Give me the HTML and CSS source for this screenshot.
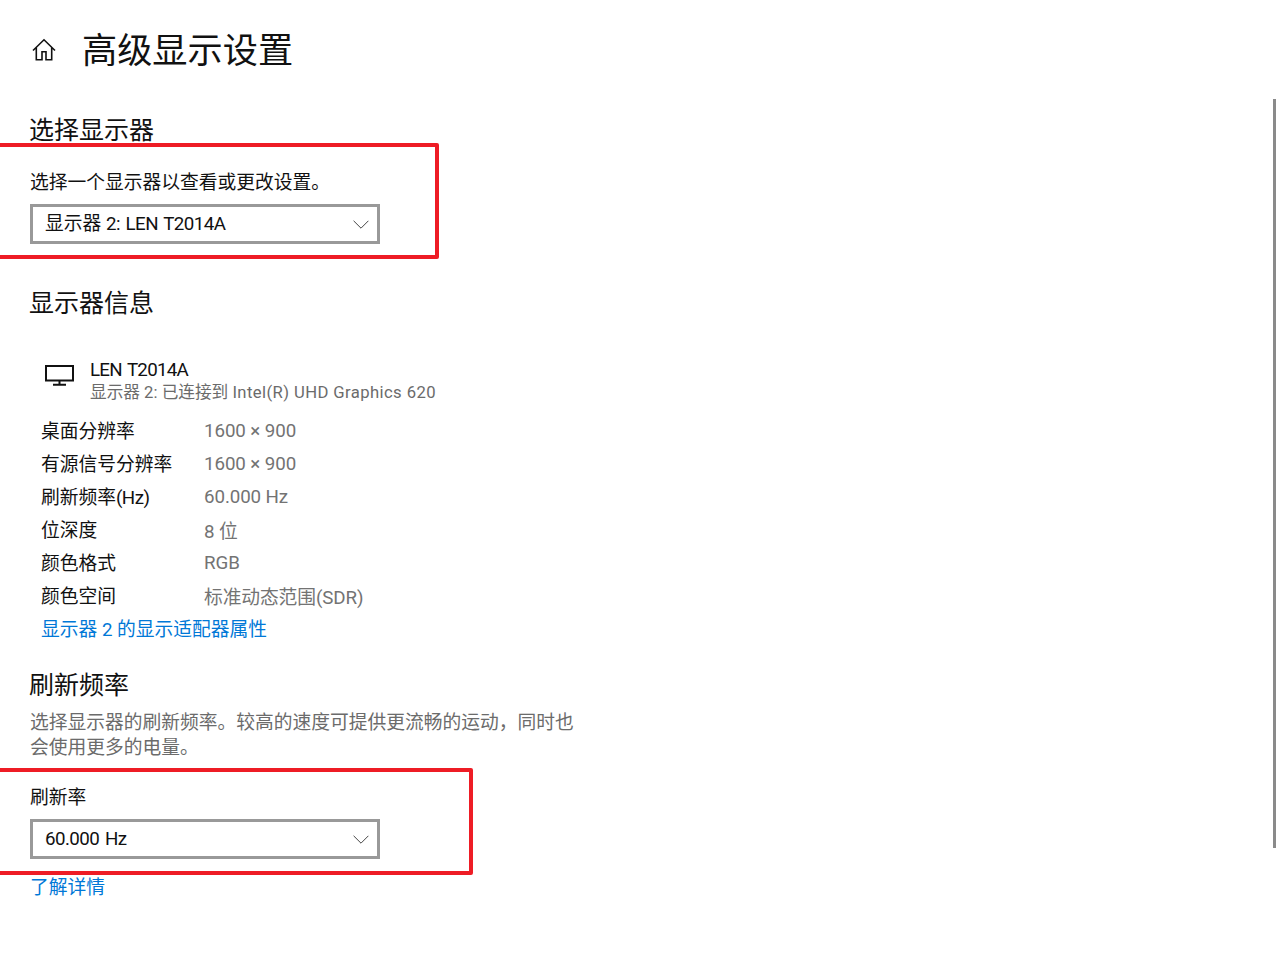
FILE: index.html
```html
<!DOCTYPE html>
<html lang="zh-CN">
<head>
<meta charset="utf-8">
<title>高级显示设置</title>
<link rel="stylesheet" href="styles.css">
</head>
<body>
<main class="page">
  <header class="title-row">
    <svg class="home-icon" viewBox="0 0 24 24" width="24" height="24" aria-hidden="true">
      <path d="M1 12.500 12 1.800l11 10.700M4.300 9.500v12.200h5.700v-7.900h4v7.900h5.700V9.500" fill="none" stroke="#111" stroke-width="1.600"/>
    </svg>
    <h1 class="title">高级显示设置</h1>
  </header>

  <h2 class="heading heading-first">选择显示器</h2>
  <p class="label label-first">选择一个显示器以查看或更改设置。</p>
  <div class="select">
    <span>显示器 <span class="tight">2: LEN T2014A</span></span>
    <svg class="chevron" viewBox="0 0 16 9" width="16" height="9" aria-hidden="true"><path d="M.6.8 8 8.2 15.4.8" fill="none" stroke="#444" stroke-width="1"/></svg>
  </div>

  <h2 class="heading heading-info">显示器信息</h2>
  <div class="monitor">
    <svg class="monitor-icon" viewBox="0 0 30 22" width="30" height="22" aria-hidden="true">
      <path d="M1 1h27v14.500H1zM14.500 15.500v4M8 19.800h13" fill="none" stroke="#111" stroke-width="2"/>
    </svg>
    <div class="monitor-text">
      <div class="monitor-name">LEN T2014A</div>
      <div class="monitor-sub">显示器 2: 已连接到 <span class="wide">Intel(R) UHD Graphics 620</span></div>
    </div>
  </div>

  <dl class="props">
    <div class="prop"><dt>桌面分辨率</dt><dd>1600 × 900</dd></div>
    <div class="prop"><dt>有源信号分辨率</dt><dd>1600 × 900</dd></div>
    <div class="prop"><dt>刷新频率<span class="tight">(Hz)</span></dt><dd>60.000 Hz</dd></div>
    <div class="prop"><dt>位深度</dt><dd>8 位</dd></div>
    <div class="prop"><dt>颜色格式</dt><dd>RGB</dd></div>
    <div class="prop"><dt>颜色空间</dt><dd>标准动态范围(SDR)</dd></div>
    <div class="prop"><a class="link" href="#">显示器 2 的显示适配器属性</a></div>
  </dl>

  <h2 class="heading heading-rate">刷新频率</h2>
  <p class="desc">选择显示器的刷新频率。较高的速度可提供更流畅的运动，同时也<br>会使用更多的电量。</p>
  <p class="label label-rate">刷新率</p>
  <div class="select">
    <span class="tight">60.000 Hz</span>
    <svg class="chevron" viewBox="0 0 16 9" width="16" height="9" aria-hidden="true"><path d="M.6.8 8 8.2 15.4.8" fill="none" stroke="#444" stroke-width="1"/></svg>
  </div>
  <a class="link link-more" href="#">了解详情</a>

  <div class="mark mark-one"></div>
  <div class="mark mark-two"></div>
  <div class="scroll-thumb"></div>
</main>
</body>
</html>
```
FILE: styles.css
```css
* { box-sizing: border-box; }
html, body { margin: 0; padding: 0; background: #fff; }
body {
  font-family: Roboto, "Noto Sans CJK SC", sans-serif;
  font-weight: 400;
  color: #111;
  font-size: 18.75px;
  overflow: hidden;
}
.page {
  position: relative;
  height: 959px;
  padding: 24px 0 0 30px;
}
.title-row { display: flex; align-items: center; height: 48px; }
.home-icon { width: 24px; height: 24px; margin: 3px 26px 0 2px; }
.title { margin: 0; font-size: 35.2px; line-height: 48px; font-weight: 400; font-family: "Noto Sans CJK SC", sans-serif; }
.heading { margin: 0 0 0 -1px; font-size: 25px; line-height: 34px; font-weight: 400; font-family: "Noto Sans CJK SC", sans-serif; }
.heading-first { margin-top: 39px; }
.heading-info { margin-top: 40px; }
.heading-rate { margin-top: 22px; }
.label { margin: 0; line-height: 26px; }
.label-first { margin-top: 25px; }
.label-rate { margin-top: 24px; }
.select {
  display: flex;
  align-items: center;
  justify-content: space-between;
  width: 350px;
  height: 40px;
  margin-top: 8px;
  padding: 0 8px 0 12px;
  border: 3px solid #999;
  background: #fff;
  line-height: 30px;
}
.tight { letter-spacing: -0.55px; word-spacing: 1.5px; }
.wide { letter-spacing: 0.4px; }
.chevron { flex: none; }
.monitor { display: flex; margin: 39px 0 0 15px; }
.monitor-icon { margin-top: 8px; }
.monitor-text { margin-left: 15px; padding-top: 2px; }
.monitor-name { line-height: 23px; letter-spacing: -0.75px; word-spacing: 1.5px; }
.monitor-sub { line-height: 22px; font-size: 16.67px; color: #6b6b6b; }
.props { margin: 9px 0 0 11px; }
.prop { display: flex; height: 33px; align-items: center; }
.prop dt { width: 163px; }
.prop dd { margin: 0; padding-top: 2px; color: #737373; letter-spacing: -0.1px; }
.link { color: #0078d7; text-decoration: none; }
.link-more { display: block; margin-top: 16px; line-height: 26px; }
.desc { margin: 11px 0 0; line-height: 25px; color: #6b6b6b; width: 560px; }
.mark { position: absolute; left: -6px; border: 4px solid #ee1c25; border-radius: 2px; }
.mark-one { top: 143px; width: 445px; height: 116px; }
.mark-two { top: 768px; width: 479px; height: 107px; }
.scroll-thumb { position: absolute; left: 1273px; top: 99px; width: 3px; height: 749px; background: #8a8a8a; }
```
